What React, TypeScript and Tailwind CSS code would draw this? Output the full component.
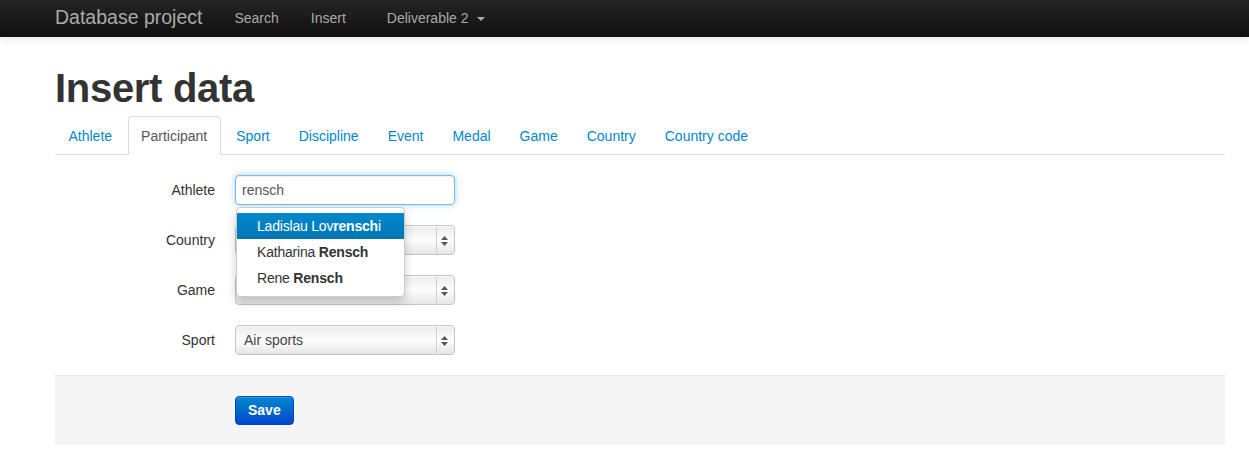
import React from 'react';

const tabs = ['Athlete', 'Participant', 'Sport', 'Discipline', 'Event', 'Medal', 'Game', 'Country', 'Country code'];

function FakeSelect({ value }: { value?: string }) {
    return (
        <div className="relative h-[30px] w-[220px] rounded-[4px] border border-[#c5c5c5] bg-gradient-to-b from-[#ececec] via-[#fdfdfd] to-[#e6e6e6] shadow-[inset_0_1px_0_rgba(255,255,255,0.8)]">
            <div className="flex h-full items-center pl-[8px] text-[14px] text-[#444]">{value}</div>
            <div className="absolute right-[17px] top-[1px] bottom-[1px] w-px bg-[#d0d0d0]" />
            <svg className="absolute right-[6px] top-[10px]" width="7" height="10" viewBox="0 0 7 10">
                <path d="M3.5 0 L7 4 L0 4 Z" fill="#555" />
                <path d="M3.5 10 L7 6 L0 6 Z" fill="#555" />
            </svg>
        </div>
    );
}

export default function App() {
    return (
        <div className="min-h-[454px] bg-white font-['Liberation_Sans',Arial,sans-serif] text-[14px] text-[#333]">
            <div className="h-[37px] bg-gradient-to-b from-[#242424] to-[#101010] shadow-[0_1px_10px_rgba(0,0,0,0.12)]">
                <div className="ml-[55px] flex h-full w-[1170px] items-center pb-[1px]">
                    <span className="text-[19.5px] text-[#aaa]">Database project</span>
                    <span className="ml-[32px] text-[#aaa]">Search</span>
                    <span className="ml-[32px] text-[#aaa]">Insert</span>
                    <span className="ml-[41px] flex items-center text-[#aaa]">
                        Deliverable 2
                        <span className="ml-[8px] mt-[2px] h-0 w-0 border-x-[4px] border-t-[4px] border-x-transparent border-t-[#aaa]" />
                    </span>
                </div>
            </div>

            <div className="ml-[55px] w-[1170px]">
                <h1 className="mt-[31px] text-[40px] font-bold leading-[40px] tracking-[-0.3px] text-[#333]">Insert data</h1>

                <div className="mt-[8px] flex border-b border-[#ddd]">
                    {tabs.map((t) => (
                        <div
                            key={t}
                            className={
                                t === 'Participant'
                                    ? '-mb-px mr-[2px] rounded-t-[4px] border border-[#ddd] border-b-white bg-white px-[12.5px] pt-[9px] pb-[7px] leading-[20px] text-[#555]'
                                    : 'mr-[2px] border border-transparent px-[12.5px] pt-[9px] pb-[7px] leading-[20px] text-[#0088cc]'
                            }
                        >
                            {t}
                        </div>
                    ))}
                </div>

                <div className="mt-[20px]">
                    <div className="flex h-[30px] items-center">
                        <div className="w-[160px] text-right">Athlete</div>
                        <div className="relative ml-[20px]">
                            <div className="flex h-[30px] w-[220px] items-center rounded-[4px] border border-[rgba(82,168,236,0.8)] pl-[6px] text-[#555] shadow-[inset_0_1px_1px_rgba(0,0,0,0.075),0_0_6px_rgba(82,168,236,0.5)]">
                                rensch
                            </div>
                            <div className="absolute left-[1px] top-[32px] z-10 w-[169px] whitespace-nowrap rounded-[5px] border border-[rgba(0,0,0,0.2)] bg-white py-[5px] tracking-[-0.2px] shadow-[0_5px_10px_rgba(0,0,0,0.2)]">
                                <div className="bg-gradient-to-b from-[#0088cc] to-[#0077b3] px-[20px] py-[3px] leading-[20px] text-white">
                                    Ladislau Lov<b>rensch</b>i
                                </div>
                                <div className="px-[20px] py-[3px] leading-[20px] text-[#333]">
                                    Katharina <b>Rensch</b>
                                </div>
                                <div className="px-[20px] py-[3px] leading-[20px] text-[#333]">
                                    Rene <b>Rensch</b>
                                </div>
                            </div>
                        </div>
                    </div>

                    <div className="mt-[20px] flex h-[30px] items-center">
                        <div className="w-[160px] text-right">Country</div>
                        <div className="ml-[20px]"><FakeSelect /></div>
                    </div>

                    <div className="mt-[20px] flex h-[30px] items-center">
                        <div className="w-[160px] text-right">Game</div>
                        <div className="ml-[20px]"><FakeSelect /></div>
                    </div>

                    <div className="mt-[20px] flex h-[30px] items-center">
                        <div className="w-[160px] text-right">Sport</div>
                        <div className="ml-[20px]"><FakeSelect value="Air sports" /></div>
                    </div>
                </div>

                <div className="mt-[20px] border-t border-[#e5e5e5] bg-[#f5f5f5] pb-[20px] pl-[180px] pt-[20px]">
                    <button className="h-[29px] rounded-[4px] border border-[#0044cc] bg-gradient-to-b from-[#0088cc] to-[#0044cc] px-[12px] font-bold text-white shadow-[inset_0_1px_0_rgba(255,255,255,0.2)]">
                        Save
                    </button>
                </div>
            </div>
        </div>
    );
}
